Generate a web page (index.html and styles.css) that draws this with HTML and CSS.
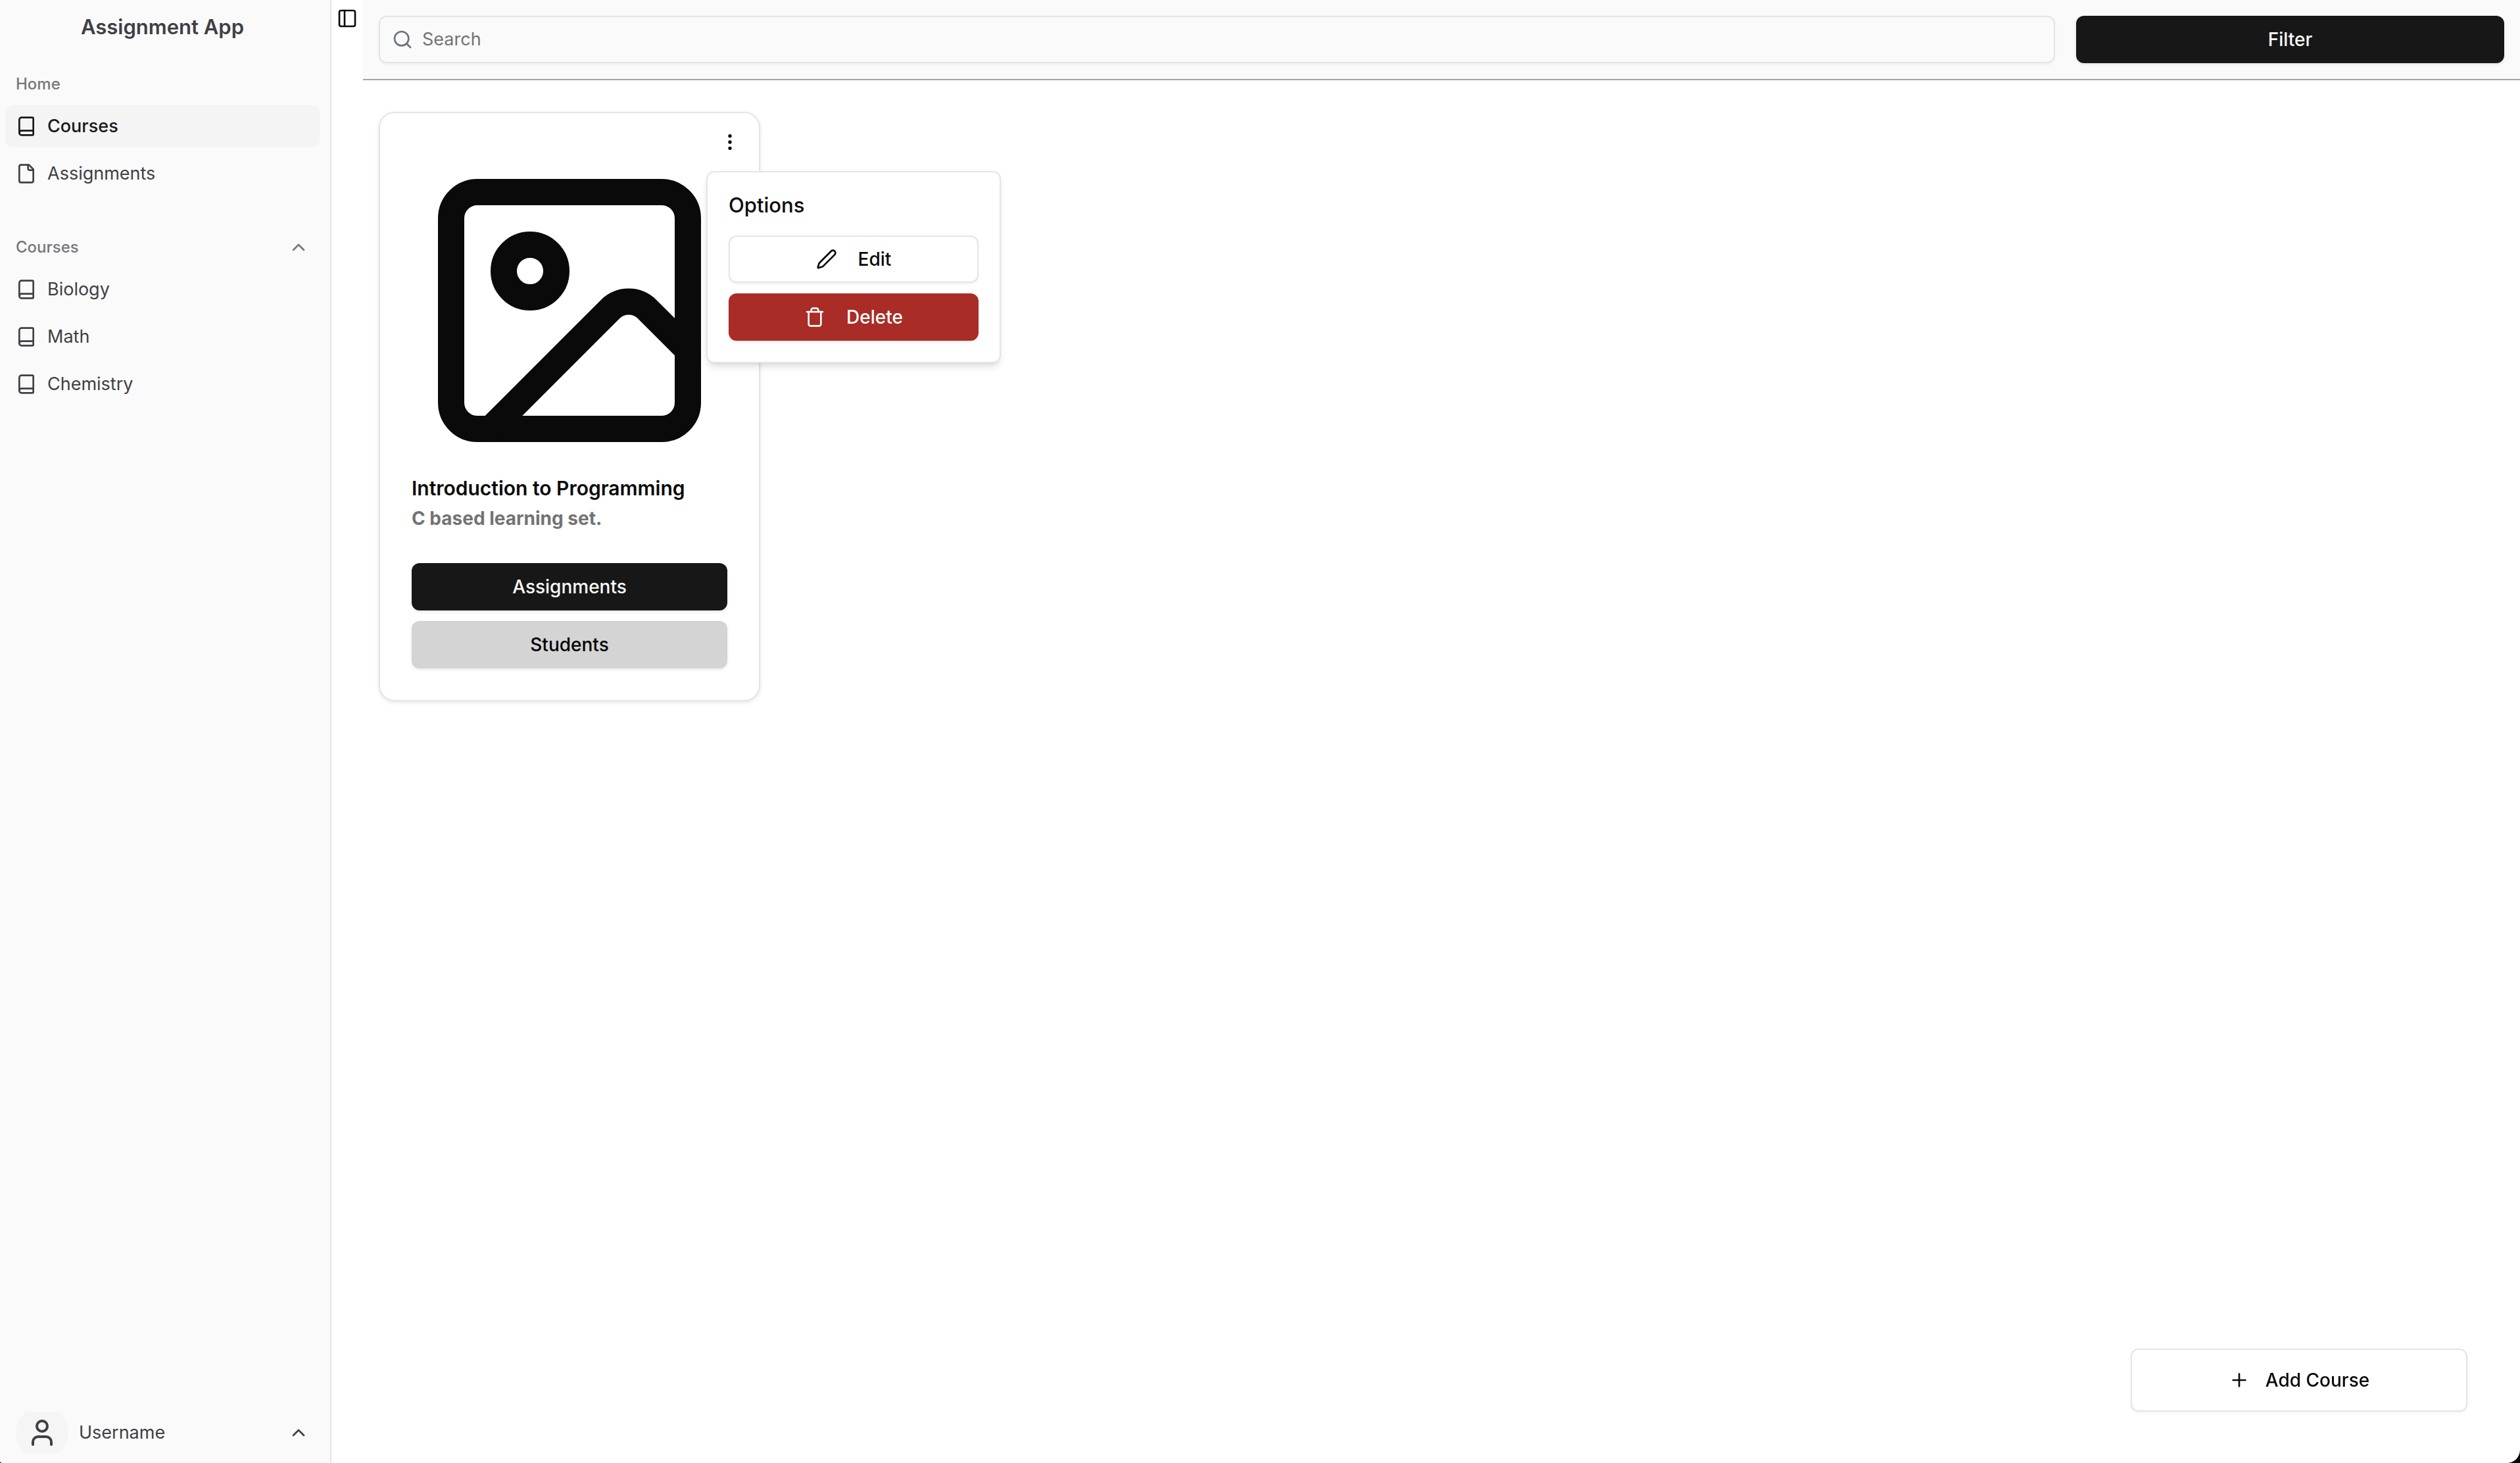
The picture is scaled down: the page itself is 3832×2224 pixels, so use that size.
FILE: index.html
```html
<!DOCTYPE html>
<html lang="en">
<head>
  <meta charset="utf-8">
  <meta name="viewport" content="width=device-width, initial-scale=1">
  <title>Assignment App</title>
  <link rel="stylesheet" href="styles.css">
</head>
<body>
  <svg class="sprite" aria-hidden="true">
    <symbol id="book" viewBox="0 0 24 24"><path d="M4 19.5v-15A2.5 2.5 0 0 1 6.5 2H19a1 1 0 0 1 1 1v18a1 1 0 0 1-1 1H6.500a1 1 0 0 1 0-5H20"/></symbol>
    <symbol id="file" viewBox="0 0 24 24"><path d="M15 2H6a2 2 0 0 0-2 2v16a2 2 0 0 0 2 2h12a2 2 0 0 0 2-2V7Z"/><path d="M14 2v4a2 2 0 0 0 2 2h4"/></symbol>
    <symbol id="chevron-up" viewBox="0 0 24 24"><path d="m18 15-6-6-6 6"/></symbol>
    <symbol id="user" viewBox="0 0 24 24"><path d="M19 21v-2a4 4 0 0 0-4-4H9a4 4 0 0 0-4 4v2"/><circle cx="12" cy="7" r="4"/></symbol>
    <symbol id="panel" viewBox="0 0 24 24"><rect width="18" height="18" x="3" y="3" rx="2"/><path d="M9 3v18"/></symbol>
    <symbol id="search" viewBox="0 0 24 24"><circle cx="11" cy="11" r="8"/><path d="m21 21-4.3-4.3"/></symbol>
    <symbol id="dots" viewBox="0 0 24 24"><circle cx="12" cy="12" r="1"/><circle cx="12" cy="5" r="1"/><circle cx="12" cy="19" r="1"/></symbol>
    <symbol id="image" viewBox="0 0 24 24"><rect width="18" height="18" x="3" y="3" rx="2"/><circle cx="9" cy="9" r="2"/><path d="m21 15-3.086-3.086a2 2 0 0 0-2.828 0L6 21"/></symbol>
    <symbol id="pen" viewBox="0 0 24 24"><path d="M21.174 6.812a1 1 0 0 0-3.986-3.987L3.842 16.174a2 2 0 0 0-.5.83l-1.321 4.352a.5.5 0 0 0 .623.622l4.353-1.32a2 2 0 0 0 .83-.497z"/></symbol>
    <symbol id="trash" viewBox="0 0 24 24"><path d="M3 6h18"/><path d="M19 6v14c0 1-1 2-2 2H7c-1 0-2-1-2-2V6"/><path d="M8 6V4c0-1 1-2 2-2h4c1 0 2 1 2 2v2"/></symbol>
    <symbol id="plus" viewBox="0 0 24 24"><path d="M5 12h14"/><path d="M12 5v14"/></symbol>
  </svg>

  <div class="app">
    <aside class="sidebar">
      <h1 class="brand">Assignment App</h1>
      <nav class="nav">
        <section class="group">
          <h2 class="group-label">Home</h2>
          <a class="nav-item active" href="#courses"><svg class="icon"><use href="#book"/></svg>Courses</a>
          <a class="nav-item" href="#assignments"><svg class="icon"><use href="#file"/></svg>Assignments</a>
        </section>
        <section class="group">
          <button class="group-label toggle" type="button" aria-expanded="true">Courses<svg class="icon"><use href="#chevron-up"/></svg></button>
          <a class="nav-item" href="#biology"><svg class="icon"><use href="#book"/></svg>Biology</a>
          <a class="nav-item" href="#math"><svg class="icon"><use href="#book"/></svg>Math</a>
          <a class="nav-item" href="#chemistry"><svg class="icon"><use href="#book"/></svg>Chemistry</a>
        </section>
      </nav>
      <button class="account" type="button">
        <span class="avatar"><svg class="icon avatar-icon"><use href="#user"/></svg></span>
        <span class="account-name">Username</span>
        <svg class="icon"><use href="#chevron-up"/></svg>
      </button>
    </aside>

    <button class="panel-toggle" type="button" aria-label="Toggle sidebar"><svg class="icon"><use href="#panel"/></svg></button>

    <main class="main">
      <header class="topbar">
        <label class="search"><svg class="icon"><use href="#search"/></svg><input class="search-input" type="search" placeholder="Search" aria-label="Search"></label>
        <button class="button primary" type="button">Filter</button>
      </header>

      <div class="courses">
        <article class="card">
          <div class="card-menu">
            <button class="menu-button" type="button" aria-label="Course options" aria-expanded="true"><svg class="icon"><use href="#dots"/></svg></button>
            <div class="popover" role="dialog" aria-labelledby="options-title">
              <h4 class="popover-title" id="options-title">Options</h4>
              <button class="button outline" type="button"><svg class="icon"><use href="#pen"/></svg>Edit</button>
              <button class="button danger" type="button"><svg class="icon"><use href="#trash"/></svg>Delete</button>
            </div>
          </div>
          <svg class="icon cover"><use href="#image"/></svg>
          <h3 class="card-title">Introduction to Programming</h3>
          <p class="card-text">C based learning set.</p>
          <div class="card-actions">
            <button class="button primary" type="button">Assignments</button>
            <button class="button muted" type="button">Students</button>
          </div>
        </article>
      </div>
    </main>

    <button class="button outline add-course" type="button"><svg class="icon"><use href="#plus"/></svg>Add Course</button>
  </div>
</body>
</html>
```
FILE: styles.css
```css
* {
  box-sizing: border-box;
}

html {
  background: #000;
}

body {
  margin: 0;
  color: #0a0a0a;
  font-family: Inter, "Liberation Sans", sans-serif;
  font-size: 28px;
  line-height: 40px;
}

h1, h2, h3, h4, p {
  margin: 0;
}

button, input {
  margin: 0;
  padding: 0;
  border: 0;
  background: none;
  color: inherit;
  font: inherit;
}

.sprite {
  position: absolute;
  width: 0;
  height: 0;
}

.icon {
  flex: none;
  width: 32px;
  height: 32px;
  fill: none;
  stroke: currentColor;
  stroke-width: 2;
  stroke-linecap: round;
  stroke-linejoin: round;
}

.app {
  display: flex;
  min-height: 100vh;
  overflow: hidden;
  border-radius: 0 0 20px 4px;
  background: #fff;
}

/* Sidebar */

.sidebar {
  display: flex;
  flex: none;
  flex-direction: column;
  width: 504px;
  padding: 16px 16px 14px 8px;
  border-right: 2px solid #e5e5e5;
  background: #fafafa;
  color: #3f3f46;
  font-size: 27px;
}

.brand {
  font-size: 31px;
  font-weight: 600;
  line-height: 50px;
  text-align: center;
}

.nav {
  display: flex;
  flex: 1;
  flex-direction: column;
  gap: 48px;
  padding-top: 30px;
}

.group {
  display: flex;
  flex-direction: column;
  gap: 8px;
}

.group-label {
  display: flex;
  align-items: center;
  justify-content: space-between;
  height: 64px;
  margin-bottom: -8px;
  padding: 0 16px;
  color: #77777c;
  font-size: 24px;
  font-weight: 500;
}

.nav-item {
  display: flex;
  align-items: center;
  gap: 16px;
  height: 64px;
  padding: 0 16px;
  border-radius: 12px;
  color: inherit;
  text-decoration: none;
}

.nav-item.active {
  background: #f4f4f5;
  color: #18181b;
  font-weight: 500;
}

.account {
  display: flex;
  align-items: center;
  gap: 16px;
  height: 64px;
  padding: 0 16px;
  overflow: hidden;
  text-align: left;
}

.avatar {
  display: flex;
  flex: none;
  align-items: center;
  justify-content: center;
  width: 80px;
  height: 80px;
  border-radius: 50%;
  background: #f5f5f5;
}

.avatar-icon {
  width: 48px;
  height: 48px;
}

.account-name {
  flex: 1;
}

.panel-toggle {
  display: flex;
  flex: none;
  align-items: center;
  justify-content: center;
  width: 48px;
  height: 56px;
}

/* Main area */

.main {
  flex: 1;
  min-width: 0;
}

.topbar {
  display: grid;
  grid-template-columns: 47fr 12fr;
  gap: 32px;
  padding: 24px;
  border-bottom: 2px solid #a3a3a3;
  background: #fafafa;
}

.search {
  display: flex;
  align-items: center;
  gap: 14px;
  height: 72px;
  padding: 0 18px;
  border: 2px solid #e5e5e5;
  border-radius: 12px;
  box-shadow: 0 2px 4px rgb(0 0 0 / 5%);
  color: #6b7280;
  font-size: 27px;
}

.search-input {
  flex: 1;
  min-width: 0;
  outline: 0;
  color: #0a0a0a;
}

.search-input::placeholder {
  color: #737373;
  opacity: 1;
}

.button {
  display: flex;
  align-items: center;
  justify-content: center;
  gap: 32px;
  height: 72px;
  border-radius: 12px;
  box-shadow: 0 2px 4px rgb(0 0 0 / 10%);
  font-weight: 500;
}

.primary {
  background: #171717;
  color: #fafafa;
}

.muted {
  background: #d4d4d4;
  color: #000;
}

.outline {
  border: 2px solid #e5e5e5;
  background: #fff;
  box-shadow: 0 2px 4px rgb(0 0 0 / 5%);
}

.danger {
  background: #a92c26;
  color: #fff;
}

.courses {
  display: flex;
  flex-wrap: wrap;
  gap: 48px;
  padding: 48px 24px;
}

.card {
  display: flex;
  flex-direction: column;
  width: 580px;
  padding: 14px 48px 48px;
  border: 2px solid #e5e5e5;
  border-radius: 24px;
  background: #fff;
  box-shadow: 0 2px 6px rgb(0 0 0 / 10%);
}

.card-menu {
  position: relative;
  align-self: flex-end;
  margin-right: -28px;
}

.menu-button {
  display: flex;
  align-items: center;
  justify-content: center;
  width: 48px;
  height: 60px;
}

.popover {
  position: absolute;
  top: 74px;
  left: -12px;
  display: flex;
  flex-direction: column;
  gap: 16px;
  width: 448px;
  padding: 32px;
  border: 2px solid #e5e5e5;
  border-radius: 12px;
  background: #fff;
  box-shadow: 0 8px 12px -2px rgb(0 0 0 / 10%), 0 4px 8px -4px rgb(0 0 0 / 10%);
}

.popover-title {
  padding-bottom: 12px;
  font-size: 31px;
  font-weight: 500;
  line-height: 36px;
}

.cover {
  width: 480px;
  height: 480px;
  margin-top: -14px;
}

.card-title {
  margin-top: 12px;
  font-size: 30px;
  font-weight: 600;
  line-height: 36px;
}

.card-text {
  margin-top: 8px;
  color: #737373;
  font-weight: 700;
}

.card-actions {
  display: flex;
  flex-direction: column;
  gap: 16px;
  margin-top: 48px;
}

.add-course {
  position: fixed;
  right: 80px;
  bottom: 78px;
  gap: 24px;
  width: 512px;
  height: 96px;
}
```
